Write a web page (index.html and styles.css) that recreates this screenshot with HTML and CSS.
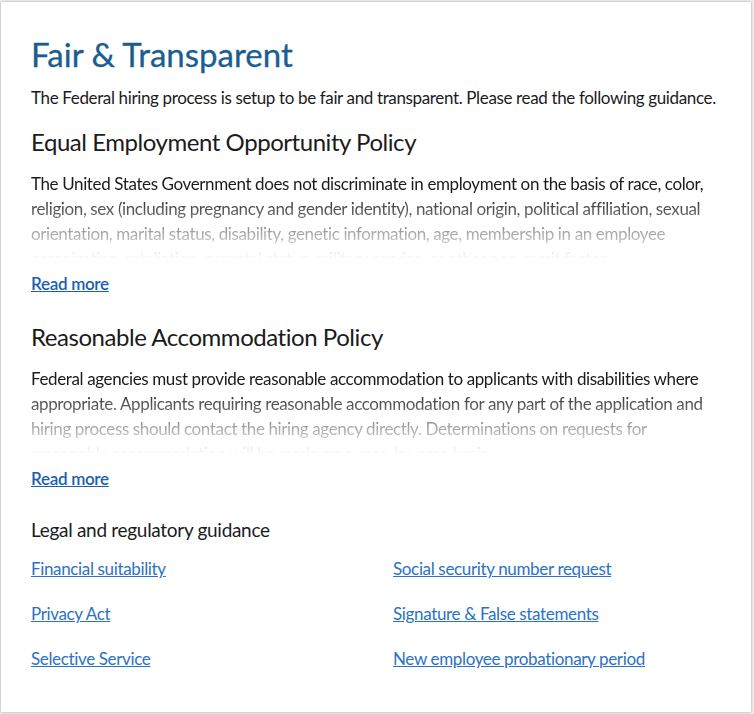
FILE: index.html
```html
<!DOCTYPE html>
<html lang="en">
<head>
<meta charset="utf-8">
<title>Fair &amp; Transparent</title>
<link rel="stylesheet" href="styles.css">
</head>
<body>
<main class="card">
  <h1 class="title">Fair &amp; Transparent</h1>
  <p class="intro">The Federal hiring process is setup to be fair and transparent. Please read the following guidance.</p>

  <section class="policy">
    <h2 class="policy-title">Equal Employment Opportunity Policy</h2>
    <p class="policy-text">The United States Government does not discriminate in employment on the basis of race, color, religion, sex (including pregnancy and gender identity), national origin, political affiliation, sexual orientation, marital status, disability, genetic information, age, membership in an employee organization, retaliation, parental status, military service, or other non-merit factor.</p>
    <a class="read-more" href="#">Read more</a>
  </section>

  <section class="policy">
    <h2 class="policy-title">Reasonable Accommodation Policy</h2>
    <p class="policy-text">Federal agencies must provide reasonable accommodation to applicants with disabilities where appropriate. Applicants requiring reasonable accommodation for any part of the application and hiring process should contact the hiring agency directly. Determinations on requests for reasonable accommodation will be made on a case-by-case basis.</p>
    <a class="read-more" href="#">Read more</a>
  </section>

  <section class="legal">
    <h3 class="legal-title">Legal and regulatory guidance</h3>
    <ul class="legal-links">
      <li><a href="#">Financial suitability</a></li>
      <li><a href="#">Social security number request</a></li>
      <li><a href="#">Privacy Act</a></li>
      <li><a href="#">Signature &amp; False statements</a></li>
      <li><a href="#">Selective Service</a></li>
      <li><a href="#">New employee probationary period</a></li>
    </ul>
  </section>
</main>
</body>
</html>
```

FILE: styles.css
```css
html, body {
  margin: 0;
  padding: 0;
}
body {
  background: #ececec;
  padding: 2px 3px 2px 1px;
  font-family: Lato, "Open Sans", sans-serif;
  color: #1b1b1b;
}
.card {
  background: #fff;
  box-shadow: 0 0 2px rgba(0, 0, 0, 0.35);
  height: 710px;
  box-sizing: border-box;
  padding: 31px 30px 0 30px;
}
.title {
  margin: 0;
  font-size: 33px;
  line-height: 42px;
  font-weight: 400;
  color: #1a5e91;
  -webkit-text-stroke: 0.3px #1a5e91;
}
.intro {
  margin: 10px 0 0;
  font-size: 17px;
  line-height: 25px;
  letter-spacing: -0.36px;
  white-space: nowrap;
}
.policy-title {
  margin: 16px 0 0;
  font-size: 24px;
  line-height: 32px;
  font-weight: 400;
  letter-spacing: -0.45px;
}
.policy + .policy .policy-title {
  margin-top: 25px;
}
.policy-text {
  margin: 13px 0 0;
  font-size: 17px;
  line-height: 25px;
  letter-spacing: -0.38px;
  height: 88px;
  overflow: hidden;
  -webkit-mask-image: linear-gradient(to bottom, #000 25%, rgba(0, 0, 0, 0) 100%);
  mask-image: linear-gradient(to bottom, #000 25%, rgba(0, 0, 0, 0) 100%);
}
.read-more {
  display: inline-block;
  margin-top: 12px;
  font-size: 17px;
  line-height: 25px;
  font-weight: 600;
  letter-spacing: -0.3px;
  color: #1a5fb4;
}
.legal-title {
  margin: 25px 0 0;
  font-size: 19px;
  line-height: 28px;
  font-weight: 400;
  letter-spacing: -0.3px;
}
.legal-links {
  list-style: none;
  margin: 12px 0 0;
  padding: 0;
  display: grid;
  grid-template-columns: 1fr 1fr;
  column-gap: 34px;
  row-gap: 20px;
}
.legal-links a {
  font-size: 17px;
  line-height: 25px;
  letter-spacing: -0.35px;
  color: #2b72c6;
}
```
